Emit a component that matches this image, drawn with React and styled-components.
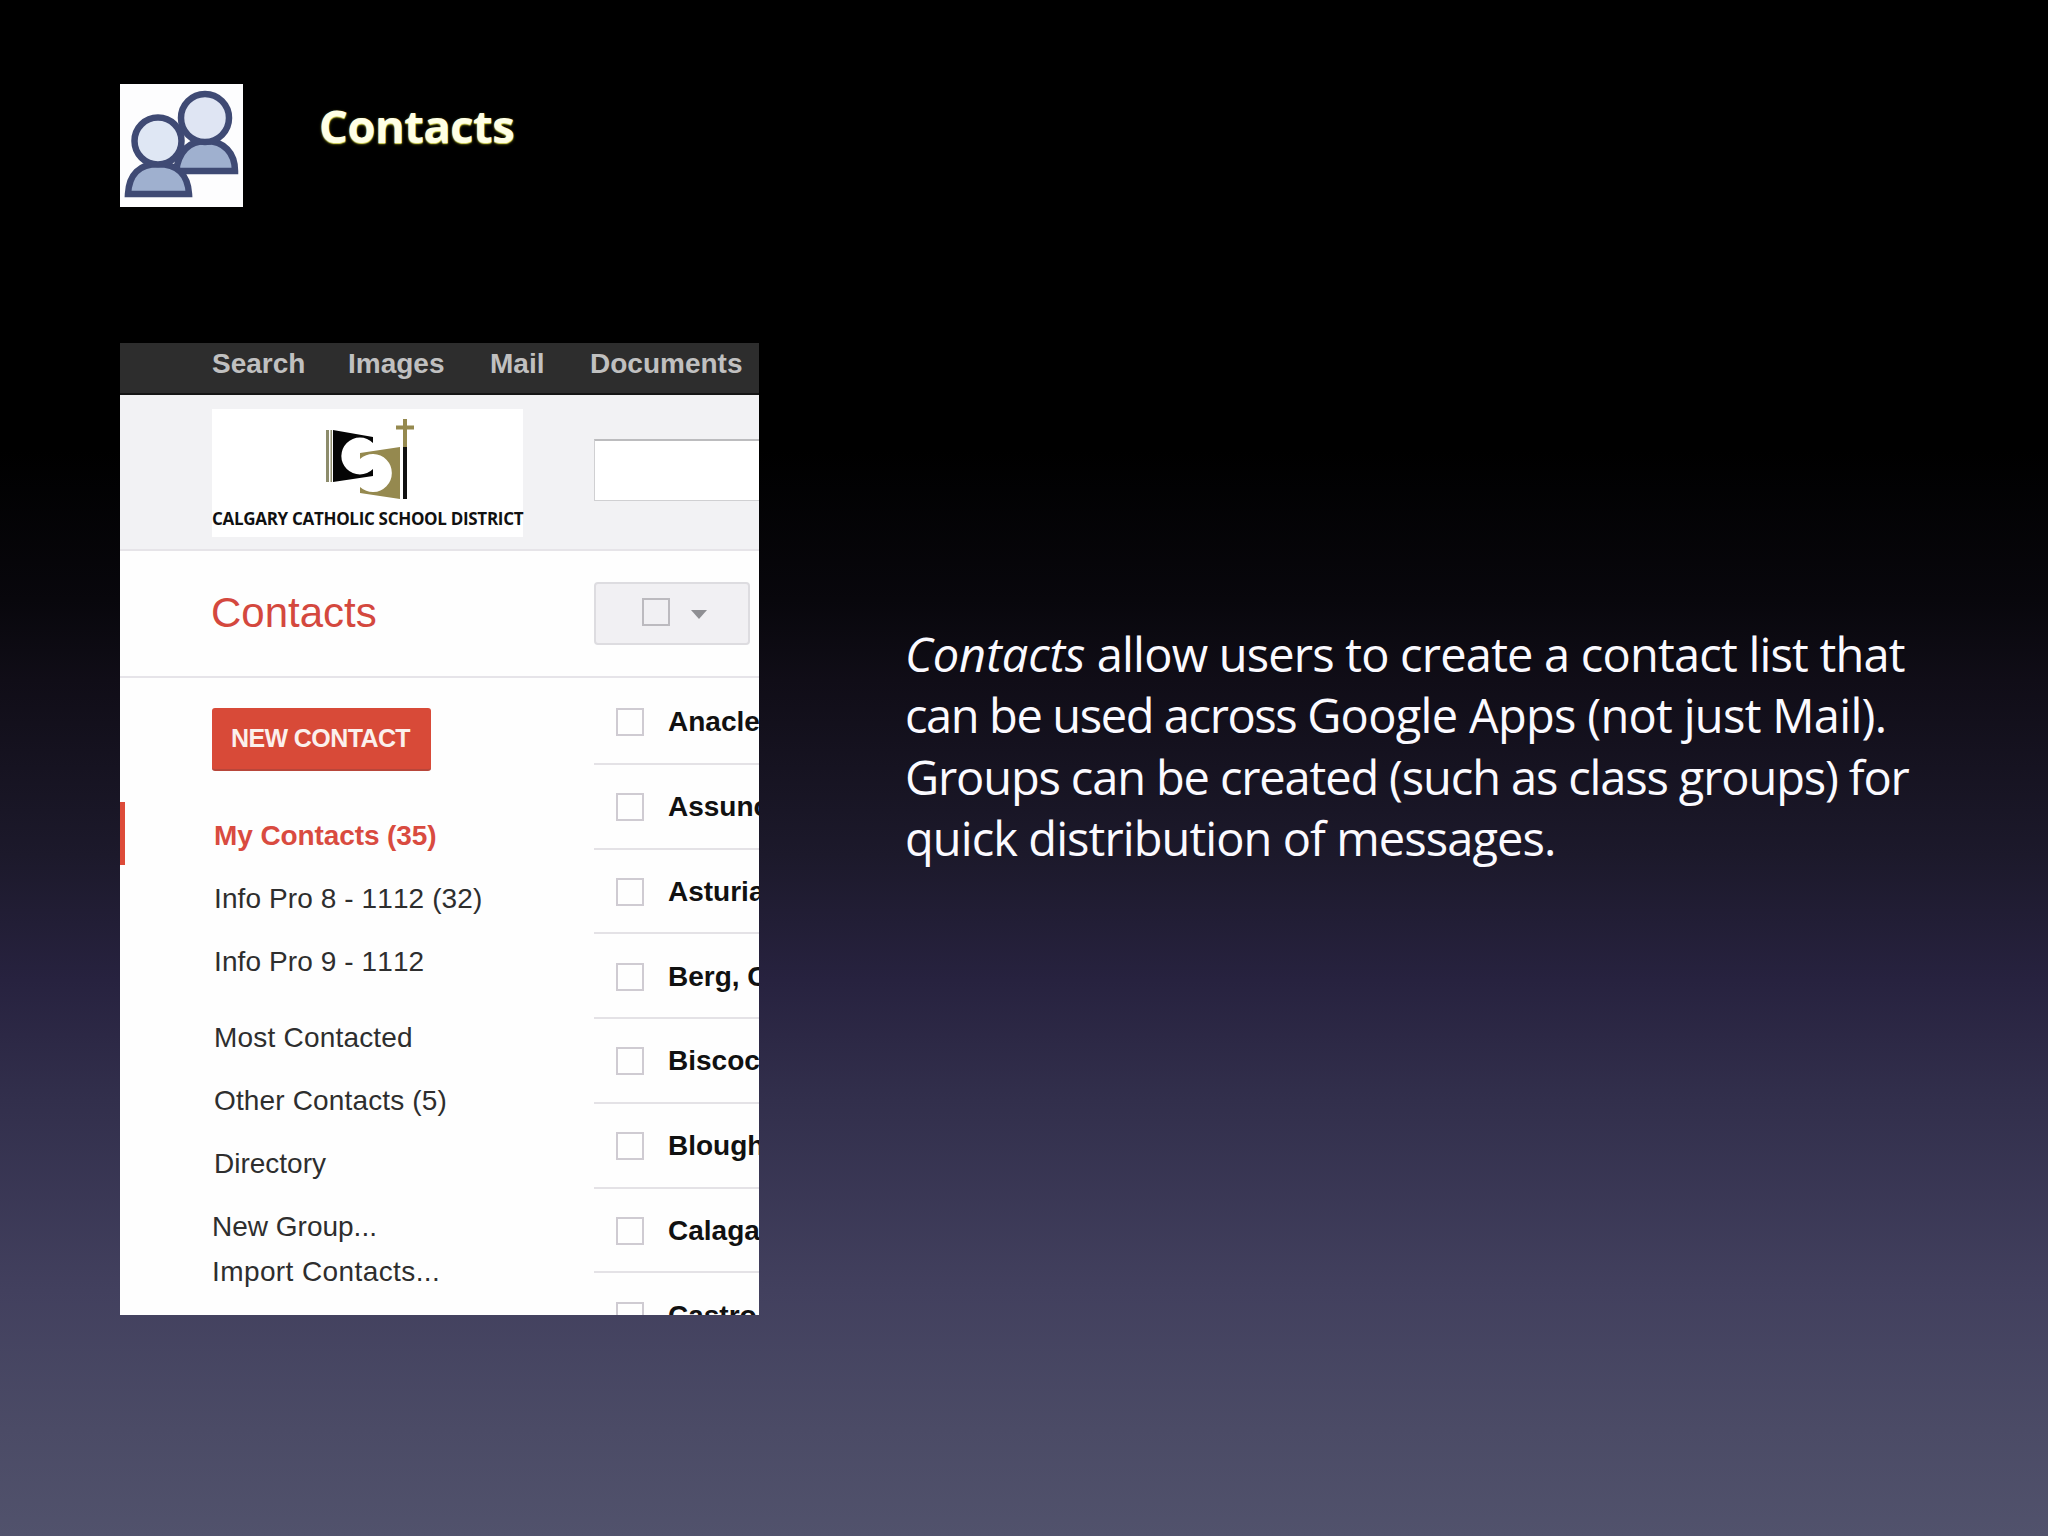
import styled, { createGlobalStyle } from "styled-components";

const GlobalStyle = createGlobalStyle`
    * {
        box-sizing: border-box;
    }
    body {
        margin: 0;
        background-color: #000;
    }
`
const Slide = styled.div`
    display: flex;
    flex-direction: column;
    width: 2048px;
    height: 1536px;
    padding: 84px 0 0 120px;
    overflow: hidden;
    background: linear-gradient(
        to bottom,
        #000 0,
        #000 450px,
        #08070c 600px,
        #100d17 680px,
        #1c192b 855px,
        #27223f 980px,
        #322f4c 1100px,
        #42405e 1290px,
        #4b4b66 1430px,
        #51526c 1536px
    );
    font-family: "Liberation Sans", Arial, sans-serif;
`
const TitleRow = styled.header`
    display: flex;
    align-items: flex-start;
    height: 259px;
`
const ContactsIcon = styled.svg`
    width: 123px;
    height: 123px;
    background-color: #fdfdfe;
`
const Title = styled.h1`
    margin: 10px 0 0 76px;
    font-family: "Open Sans", "Noto Sans", sans-serif;
    font-size: 45.5px;
    font-weight: 700;
    line-height: 62px;
    letter-spacing: -0.6px;
    color: #ffffe6;
    text-shadow: 0 1px 1px #d8d860, 0 1px 3px rgba(150, 150, 20, 0.7);
`
const Content = styled.div`
    display: flex;
    align-items: flex-start;
`
const Shot = styled.section`
    display: flex;
    flex-direction: column;
    flex: none;
    width: 639px;
    height: 972px;
    overflow: hidden;
    background-color: #fefefe;
`
const NavBar = styled.nav`
    display: flex;
    flex: none;
    height: 52px;
    padding-left: 92px;
    background-color: #2d2d2d;
    border-bottom: 2px solid #151515;
`
const NavItem = styled.span`
    width: ${(props) => props.$width}px;
    flex: none;
    font-size: 28px;
    font-weight: 700;
    line-height: 42px;
    color: #c0c0c0;
`
const Banner = styled.div`
    display: flex;
    flex: none;
    height: 156px;
    padding: 14px 0 0 92px;
    background-color: #f2f2f4;
    border-bottom: 2px solid #e6e4e8;
`
const LogoBox = styled.div`
    display: flex;
    flex-direction: column;
    flex: none;
    width: 311px;
    height: 128px;
    background-color: #fff;
`
const LogoMark = styled.svg`
    flex: none;
    width: 110px;
    height: 98px;
    margin-left: 100px;
`
const LogoText = styled.span`
    font-family: "Open Sans", "Noto Sans", sans-serif;
    font-size: 17px;
    font-weight: 700;
    line-height: 24px;
    letter-spacing: -0.31px;
    white-space: nowrap;
    color: #111;
`
const SearchField = styled.div`
    flex: none;
    width: 180px;
    height: 62px;
    margin: 30px 0 0 71px;
    background-color: #fff;
    border: 1px solid #d0d0d2;
    border-top: 2px solid #bcbcbe;
`
const Toolbar = styled.div`
    display: flex;
    flex: none;
    height: 127px;
    padding-left: 91px;
    border-bottom: 2px solid #e6e4e9;
`
const Heading = styled.h2`
    width: 383px;
    margin: 39px 0 0;
    font-size: 42px;
    font-weight: 400;
    line-height: 46px;
    color: #d4483e;
`
const SelectButton = styled.div`
    display: flex;
    align-items: center;
    width: 156px;
    height: 63px;
    margin-top: 31px;
    padding: 0 0 4px 46px;
    background-color: #f1f0f3;
    border: 2px solid #dddce0;
    border-radius: 4px;
`
const Checkbox = styled.span`
    flex: none;
    width: 28px;
    height: 28px;
    border: 2px solid ${(props) => props.$color || "#cfcbd2"};
`
const Caret = styled.span`
    margin: 6px 0 0 21px;
    border: 8px solid transparent;
    border-top: 9px solid #8f8f93;
    border-bottom: 0;
`
const Columns = styled.div`
    display: flex;
    height: 637px;
`
const Sidebar = styled.aside`
    flex: none;
    width: 474px;
    padding-top: 30px;
`
const NewContact = styled.div`
    width: 219px;
    height: 63px;
    margin: 0 0 31px 92px;
    padding-left: 19px;
    background-color: #d84a38;
    border-bottom: 2px solid #b8463a;
    border-radius: 3px;
    font-size: 25px;
    font-weight: 700;
    line-height: 61px;
    letter-spacing: -0.6px;
    white-space: nowrap;
    color: #fbf0ec;
`
const Group = styled.div`
    height: ${(props) => props.$height || 63}px;
    padding-left: ${(props) => (props.$active ? 89 : 94)}px;
    border-left: ${(props) => (props.$active ? "5px solid #dd4b39" : "none")};
    font-size: 28px;
    font-weight: ${(props) => (props.$active ? 700 : 400)};
    font-kerning: none;
    line-height: 67px;
    letter-spacing: ${(props) => props.$spacing || 0}px;
    color: ${(props) => (props.$active ? "#d94b40" : "#2e2e2e")};
`
const GroupAction = styled.div`
    height: 45px;
    padding-left: 92px;
    font-size: 28px;
    line-height: 67px;
    letter-spacing: ${(props) => props.$spacing || 0}px;
    color: #2e2e2e;
`
const ContactList = styled.div`
    flex: none;
    width: 165px;
    padding-top: 2px;
`
const Contact = styled.div`
    display: flex;
    align-items: center;
    height: 84.75px;
    padding: 2px 0 0 22px;
    border-bottom: 2px solid #e4e2e6;
    font-size: 28px;
    font-weight: 700;
    white-space: nowrap;
    color: #111;

    ${Checkbox} {
        margin-right: 24px;
    }
`
const Description = styled.p`
    margin: 281px 0 0 146px;
    font-family: "Open Sans", "Noto Sans", sans-serif;
    font-size: 47px;
    line-height: 61.4px;
    color: #fbfaff;
`
const Line = styled.span`
    display: block;
    white-space: nowrap;
    letter-spacing: ${(props) => props.$spacing}px;
`
const Emphasis = styled.em`
    letter-spacing: 0;
`
const Tight = styled.span`
    letter-spacing: -1.4px;
`

const contacts = ["Anaclet", "Assunca", "Asturias", "Berg, Chris", "Biscocho", "Blough", "Calagan", "Castro,"]

function People() {
    return (
        <ContactsIcon viewBox="0 0 123 123">
            <g stroke="#3f4a74" strokeWidth="6.5">
                <path d="M56 87 C59 67 69 57 86 57 C104 57 115 69 115 87 Z" fill="#9fb0cf" />
                <circle cx="85" cy="34" r="24" fill="#dfe5f3" />
                <path d="M8 110 C9 90 20 80 38 80 C57 80 68 91 69 110 Z" fill="#9fb0cf" />
                <circle cx="38" cy="57" r="23.5" fill="#dfe7f4" />
            </g>
        </ContactsIcon>
    )
}

function DistrictLogo() {
    return (
        <LogoMark viewBox="312 409 110 98">
            <path d="M326 430h3v52h-3zM330.500 430h1.500v52h-1.500z" fill="#8d8c6c" />
            <path d="M333 430 L373 437 V443 A18.500 18.500 0 1 0 373 469 V476 L333 482 Z" fill="#050505" />
            <path d="M360 453 L400 447 V499 L360 493 V487 A19 19 0 1 0 360 459 Z" fill="#95894f" />
            <path d="M403 419h4v28h-4zM396 425.500h18v4h-18z" fill="#95894f" />
            <path d="M403 447h4v52h-4z" fill="#111" />
        </LogoMark>
    )
}

export default function App() {
    return (
        <Slide>
            <GlobalStyle />
            <TitleRow>
                <People />
                <Title>Contacts</Title>
            </TitleRow>
            <Content>
                <Shot>
                    <NavBar>
                        <NavItem $width={136}>Search</NavItem>
                        <NavItem $width={142}>Images</NavItem>
                        <NavItem $width={100}>Mail</NavItem>
                        <NavItem $width={160}>Documents</NavItem>
                    </NavBar>
                    <Banner>
                        <LogoBox>
                            <DistrictLogo />
                            <LogoText>CALGARY CATHOLIC SCHOOL DISTRICT</LogoText>
                        </LogoBox>
                        <SearchField />
                    </Banner>
                    <Toolbar>
                        <Heading>Contacts</Heading>
                        <SelectButton>
                            <Checkbox $color="#bcbabf" />
                            <Caret />
                        </SelectButton>
                    </Toolbar>
                    <Columns>
                        <Sidebar>
                            <NewContact>NEW CONTACT</NewContact>
                            <Group $active $spacing={-0.1}>My Contacts (35)</Group>
                            <Group $spacing={0.1}>Info Pro 8 - 1112 (32)</Group>
                            <Group $height={76} $spacing={0.1}>Info Pro 9 - 1112</Group>
                            <Group $spacing={0.2}>Most Contacted</Group>
                            <Group $spacing={0.15}>Other Contacts (5)</Group>
                            <Group>Directory</Group>
                            <GroupAction>New Group...</GroupAction>
                            <GroupAction $spacing={0.4}>Import Contacts...</GroupAction>
                        </Sidebar>
                        <ContactList>
                            {contacts.map((name) => (
                                <Contact key={name}>
                                    <Checkbox />
                                    {name}
                                </Contact>
                            ))}
                        </ContactList>
                    </Columns>
                </Shot>
                <Description>
                    <Line $spacing={-0.8}><Emphasis>Contacts</Emphasis> allow users to create a contact list that</Line>
                    <Line $spacing={-0.7}><Tight>can be used across </Tight>Google Apps (not just Mail).</Line>
                    <Line $spacing={-1.14}>Groups can be created (such as class groups) for</Line>
                    <Line $spacing={-0.92}>quick distribution of messages.</Line>
                </Description>
            </Content>
        </Slide>
    )
}
